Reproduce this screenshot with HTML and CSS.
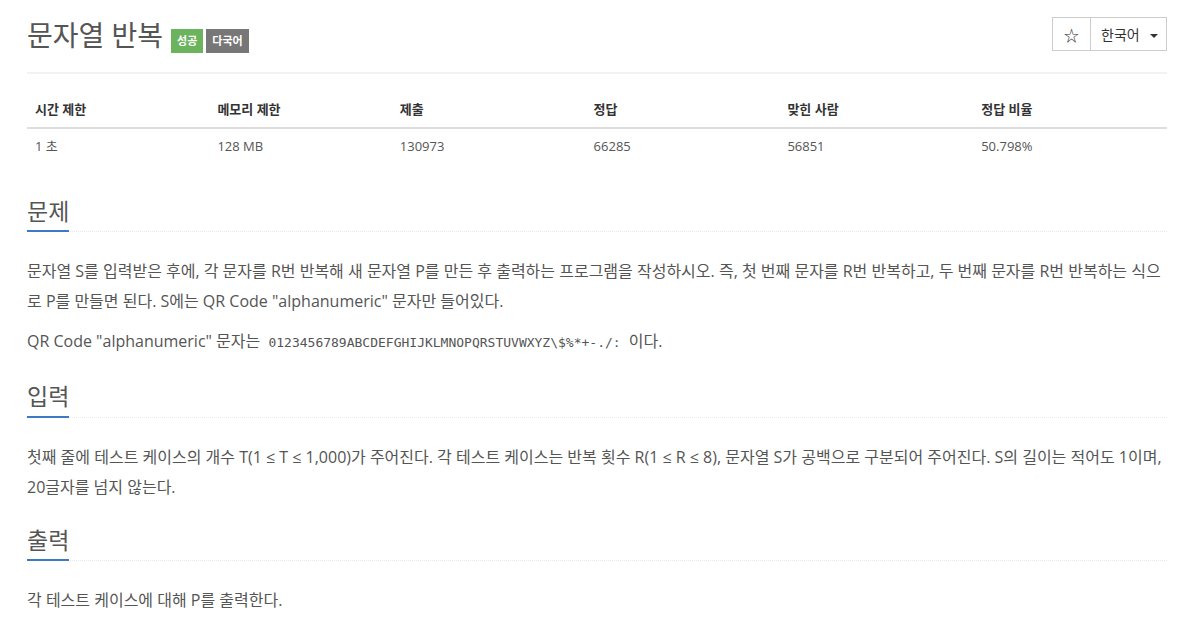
FILE: index.html
```html
<!DOCTYPE html>
<html lang="ko">
<head>
<meta charset="utf-8">
<title>문자열 반복</title>
<link rel="stylesheet" href="styles.css">
</head>
<body>
<div class="container">
  <div class="page-header">
    <h1 class="problem-title">문자열 반복<span class="label label-success">성공</span><span class="label label-default">다국어</span></h1>
    <div class="btn-group">
      <button class="btn btn-star">&#9734;</button>
      <button class="btn btn-lang">한국어<span class="caret"></span></button>
    </div>
  </div>

  <table class="problem-info">
    <thead>
      <tr>
        <th class="w-s">시간 제한</th>
        <th class="w-s">메모리 제한</th>
        <th>제출</th>
        <th>정답</th>
        <th>맞힌 사람</th>
        <th>정답 비율</th>
      </tr>
    </thead>
    <tbody>
      <tr>
        <td>1 초</td>
        <td>128 MB</td>
        <td>130973</td>
        <td>66285</td>
        <td>56851</td>
        <td>50.798%</td>
      </tr>
    </tbody>
  </table>

  <section class="problem-section">
    <div class="headline"><h2>문제</h2></div>
    <div class="problem-text">
      <p>문자열 S를 입력받은 후에, 각 문자를 R번 반복해 새 문자열 P를 만든 후 출력하는 프로그램을 작성하시오. 즉, 첫 번째 문자를 R번 반복하고, 두 번째 문자를 R번 반복하는 식으로 P를 만들면 된다. S에는 QR Code "alphanumeric" 문자만 들어있다.</p>
      <p>QR Code "alphanumeric" 문자는 <code>0123456789ABCDEFGHIJKLMNOPQRSTUVWXYZ\$%*+-./:</code> 이다.</p>
    </div>
  </section>

  <section class="problem-section">
    <div class="headline"><h2>입력</h2></div>
    <div class="problem-text">
      <p>첫째 줄에 테스트 케이스의 개수 T(1 ≤ T ≤ 1,000)가 주어진다. 각 테스트 케이스는 반복 횟수 R(1 ≤ R ≤ 8), 문자열 S가 공백으로 구분되어 주어진다. S의 길이는 적어도 1이며, 20글자를 넘지 않는다.</p>
    </div>
  </section>

  <section class="problem-section">
    <div class="headline"><h2>출력</h2></div>
    <div class="problem-text">
      <p>각 테스트 케이스에 대해 P를 출력한다.</p>
    </div>
  </section>
</div>
</body>
</html>
```

FILE: styles.css
```css
* { box-sizing: border-box; }
body { margin: 0; background: #fff; color: #555; font-family: "Open Sans", "Noto Sans CJK KR", sans-serif; font-size: 13px; line-height: 1.6; font-feature-settings: "palt"; }
.container { width: 1140px; margin-left: 27px; }

.page-header { display: flex; justify-content: space-between; align-items: flex-start; padding-top: 17px; border-bottom: 2px solid #f2f2f2; height: 74px; }
.problem-title { display: flex; align-items: flex-start; margin: 0; font-size: 28px; font-weight: 400; line-height: 1.1; color: #555; padding-top: 3px; }
.label { display: inline-block; font-size: 11px; font-weight: 700; color: #fff; line-height: 12px; padding: 6px 6px; margin-top: 9px; }
.label-success { background: #6bb35c; margin-left: 8px; }
.label-default { background: #777; margin-left: 3px; }

.btn-group { display: flex; }
.btn { height: 34px; border: 1px solid #ccc; background: #fff; color: #333; font-family: inherit; font-size: 14px; padding: 0 10px; white-space: nowrap; cursor: pointer; }
.btn-star { width: 39px; padding: 0; font-size: 15px; }
.btn-lang { margin-left: -1px; width: 77px; text-align: left; }
.caret { display: inline-block; width: 0; height: 0; margin-left: 10px; vertical-align: middle; border-top: 4px solid #333; border-left: 4px solid transparent; border-right: 4px solid transparent; }

.problem-info { width: 100%; border-collapse: collapse; margin-top: 18px; }
.problem-info th, .problem-info td { text-align: left; padding: 8px; line-height: 1.42857; }
.problem-info th { font-weight: 700; color: #333; border-bottom: 2px solid #ddd; width: 17%; }
.problem-info th.w-s { width: 16%; }
.problem-info td { color: #555; }

.headline { border-bottom: 1px dotted #e4e9f0; margin: 26px 0 24px; }
.problem-info + .problem-section .headline { margin-top: 36px; }
.headline h2 { display: inline-block; margin: 0 0 -1px; padding-bottom: 6px; font-size: 23px; font-weight: 400; line-height: 1.1; color: #555; border-bottom: 2px solid #3d7ac4; }

.problem-text { font-size: 16px; line-height: 30px; color: #555; }
.problem-text p { margin: 0 0 10px; }
.problem-text code { font-family: "DejaVu Sans Mono", monospace; font-size: 13px; color: #555; padding: 2px 4px; }
```
